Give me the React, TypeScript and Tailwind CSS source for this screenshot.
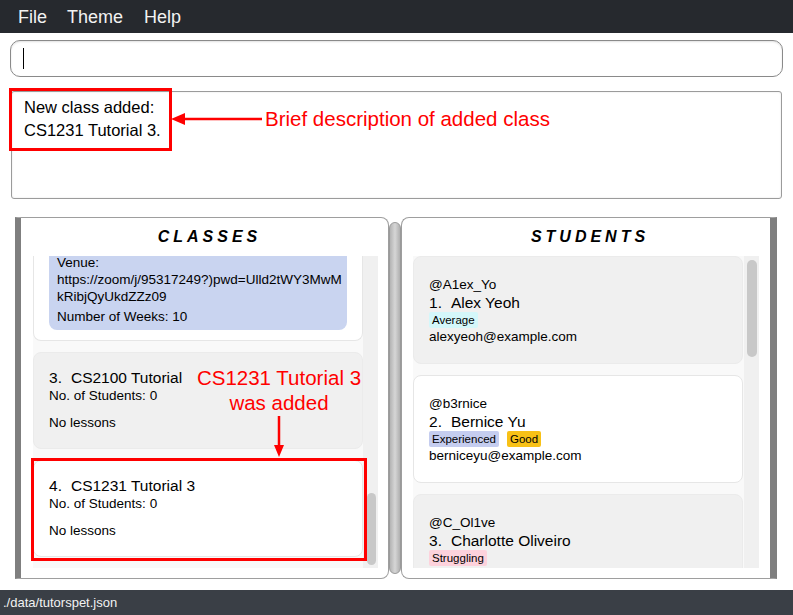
import React from "react";

type Student = {
  handle: string;
  name: string;
  tags: { label: string; cls: string }[];
  email?: string;
  gray: boolean;
};

const students: Student[] = [
  { handle: "@A1ex_Yo", name: "Alex Yeoh", tags: [{ label: "Average", cls: "bg-[#d4f7fa]" }], email: "alexyeoh@example.com", gray: true },
  {
    handle: "@b3rnice",
    name: "Bernice Yu",
    tags: [
      { label: "Experienced", cls: "bg-[#c5cdef]" },
      { label: "Good", cls: "bg-[#f8c116]" },
    ],
    email: "berniceyu@example.com",
    gray: false,
  },
  // last card is scrolled past the bottom of the list, email is out of view
  { handle: "@C_Ol1ve", name: "Charlotte Oliveiro", tags: [{ label: "Struggling", cls: "bg-[#fdd2dc]" }], gray: true },
];

const ClassCard = ({ no, title, gray }: { no: number; title: string; gray: boolean }) => (
  <div
    className={`shrink-0 rounded-[8px] border px-[15px] pt-[15px] pb-[17px] ${
      gray ? "bg-[#f0f0f0] border-[#ebebeb]" : "bg-white border-[#e6e6e6]"
    }`}
  >
    <div className="flex gap-[9px] text-[15.5px] leading-[19px]">
      <span>{no}.</span>
      <span>{title}</span>
    </div>
    <div className="flex gap-[4px] text-[13.5px] leading-[17px]">
      <span>No. of Students:</span>
      <span>0</span>
    </div>
    <div className="mt-[10px] text-[13.5px] leading-[17px]">No lessons</div>
  </div>
);

const StudentCard = ({ s, i }: { s: Student; i: number }) => (
  <div
    className={`shrink-0 rounded-[8px] border px-[15px] pt-[19px] pb-[18px] ${
      s.gray ? "bg-[#f0f0f0] border-[#ebebeb]" : "bg-white border-[#e6e6e6]"
    }`}
  >
    <div className="text-[13.5px] leading-[17px]">{s.handle}</div>
    <div className="flex gap-[9px] text-[15.5px] leading-[19px]">
      <span>{i}.</span>
      <span>{s.name}</span>
    </div>
    <div className="flex gap-[8px]">
      {s.tags.map((t) => (
        <span key={t.label} className={`rounded-[2px] px-[3px] text-[11.5px] leading-[16px] ${t.cls}`}>
          {t.label}
        </span>
      ))}
    </div>
    {s.email && <div className="text-[13.5px] leading-[17px]">{s.email}</div>}
  </div>
);

export default function App() {
  return (
    <div className="relative flex h-[615px] w-[793px] flex-col overflow-hidden bg-white font-['Liberation_Sans',Arial,sans-serif] text-black">
      {/* menu bar */}
      <div className="flex h-[33px] shrink-0 items-center bg-[#26292e] pl-[8px] pt-[1px] text-[18px] text-[#f2f2f2]">
        <span className="px-[10px]">File</span>
        <span className="px-[10px]">Theme</span>
        <span className="px-[11px]">Help</span>
      </div>

      {/* command box */}
      <div className="px-[10px] pt-[7px]">
        <div className="flex h-[37px] items-center rounded-[10px] border border-[#8a8a8a] bg-white pl-[12px] shadow-[inset_0_1px_2px_rgba(0,0,0,0.12)]">
          <span className="h-[21px] w-px bg-black" />
        </div>
      </div>

      {/* result display */}
      <div className="mx-[11px] mt-[14px] h-[108px] rounded-[3px] border border-[#9b9b9b] px-[12px] pt-[4px] text-[16.5px] leading-[23px] shadow-[inset_0_0_2px_rgba(0,0,0,0.12)]">
        <div>New class added:</div>
        <div>CS1231 Tutorial 3.</div>
      </div>

      {/* panels */}
      <div className="ml-[15px] mt-[18px] flex h-[362px] shrink-0">
        {/* classes */}
        <div className="flex w-[374px] flex-col rounded-r-[8px] border border-[#9e9e9e] border-l-[6px] border-l-[#7f7f7f] bg-white pb-[10px] pl-[12px] pr-[10px] pt-[9px]">
          <div className="h-[20px] pl-[8px] text-center text-[16px] font-bold italic leading-[20px] tracking-[4px]">CLASSES</div>
          <div className="mt-[9px] flex min-h-0 flex-1 bg-[#f9f9f9]">
            <div className="flex w-[330px] flex-col gap-[11px] overflow-hidden">
              <div className="-mt-[2px] shrink-0 rounded-b-[8px] border border-t-0 border-[#e6e6e6] bg-white px-[15px] pb-[10px]">
                <div className="rounded-b-[8px] bg-[#c9d4f0] px-[8px] pb-[5px] text-[13.5px] leading-[17px]">
                  <div>Venue:</div>
                  <div>https://zoom/j/95317249?)pwd=Ulld2tWY3MwM</div>
                  <div>kRibjQyUkdZZz09</div>
                  <div className="mt-[2.5px]">Number of Weeks: 10</div>
                </div>
              </div>
              <ClassCard no={3} title="CS2100 Tutorial" gray />
              <ClassCard no={4} title="CS1231 Tutorial 3" gray={false} />
            </div>
            <div className="flex w-[15px] flex-col bg-[#f0f0f0] pb-[3px] pl-[4px]">
              <div className="flex-1" />
              <div className="h-[72px] w-[9px] rounded-full bg-[#c8c8c8]" />
            </div>
          </div>
        </div>

        {/* splitter */}
        <div className="my-[5px] w-[12px] rounded-full border border-[#9a9a9a] bg-linear-to-r from-[#b4b4b4] via-[#d6d6d6] to-[#b0b0b0]" />

        {/* students */}
        <div className="flex w-[376px] flex-col rounded-l-[8px] border border-[#9e9e9e] border-r-[7px] border-r-[#7f7f7f] bg-white pb-[10px] pl-[11px] pr-[11px] pt-[9px]">
          <div className="h-[20px] pl-[8px] text-center text-[16px] font-bold italic leading-[20px] tracking-[4px]">STUDENTS</div>
          <div className="mt-[9px] flex min-h-0 flex-1 bg-[#f9f9f9]">
            <div className="flex w-[330px] flex-col gap-[11px] overflow-hidden">
              {students.map((s, i) => (
                <StudentCard key={s.handle} s={s} i={i + 1} />
              ))}
            </div>
            <div className="ml-[1px] flex w-[15px] flex-col bg-[#f0f0f0] pl-[3px] pt-[4px]">
              <div className="h-[97px] w-[10px] rounded-full bg-[#c8c8c8]" />
            </div>
          </div>
        </div>
      </div>

      <div className="flex-1" />

      {/* status bar */}
      <div className="flex h-[25px] shrink-0 items-center bg-[#3a3f46] pl-[3px] text-[13px] text-[#f2f2f2]">
        ./data/tutorspet.json
      </div>

      {/* annotations */}
      <div className="absolute left-[9px] top-[88px] h-[63px] w-[163px] border-[3px] border-[#f00]" />
      <svg className="absolute left-[171px] top-[112px]" width="92" height="14" viewBox="0 0 92 14">
        <line x1="12" y1="7" x2="91" y2="7" stroke="#f00" strokeWidth="2.5" />
        <polygon points="0,7 14,1 14,13" fill="#f00" />
      </svg>
      <div className="absolute left-[265px] top-[107px] text-[20.5px] leading-[24px] text-[#f00]">
        Brief description of added class
      </div>

      <div className="absolute left-[179px] top-[365px] w-[200px] text-center text-[20.5px] leading-[25px] text-[#f00]">
        <div>CS1231 Tutorial 3</div>
        <div>was added</div>
      </div>
      <svg className="absolute left-[273px] top-[416px]" width="12" height="42" viewBox="0 0 12 42">
        <line x1="6" y1="0" x2="6" y2="31" stroke="#f00" strokeWidth="2.5" />
        <polygon points="1,29 11,29 6,41" fill="#f00" />
      </svg>
      <div className="absolute left-[31px] top-[458px] h-[103px] w-[336px] border-[3px] border-[#f00]" />
    </div>
  );
}
